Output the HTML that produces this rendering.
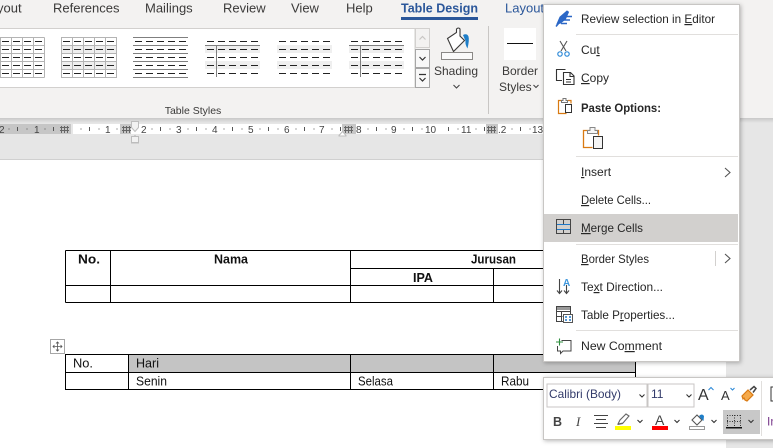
<!DOCTYPE html>
<html><head><meta charset="utf-8"><style>
html,body{margin:0;padding:0;background:#fff}
body{width:773px;height:448px;overflow:hidden;position:relative}
svg{position:absolute;left:0;top:0;display:block}
text{font-family:"Liberation Sans",sans-serif;font-size:12px;fill:#3b3a39}
.m{font-size:12px;fill:#262626}
.u{text-decoration:underline}
.r{font-size:10px;fill:#444}
.t{font-size:12.5px;fill:#111}
.tb{font-size:12.5px;fill:#111;font-weight:bold}
</style></head><body>
<svg width="773" height="448" viewBox="0 0 773 448" xmlns="http://www.w3.org/2000/svg">
<defs>
<linearGradient id="sh" x1="0" y1="0" x2="0" y2="1"><stop offset="0" stop-color="#c8c8c8"/><stop offset="1" stop-color="#e6e6e6"/></linearGradient>
<filter id="ds" x="-10%" y="-10%" width="120%" height="120%"><feDropShadow dx="1" dy="1" stdDeviation="2" flood-color="#000" flood-opacity=".28"/></filter>
<g id="dashes" stroke="#222" stroke-width="1" stroke-dasharray="7 4">
<path d="M2 4.500H55M2 12.500H55M2 20.500H55M2 28.500H55M2 36.500H55"/>
</g>
<g id="shade" fill="#efefef"><rect y="8" width="55" height="8"/><rect y="24" width="55" height="8"/></g>
</defs>

<!-- backgrounds -->
<rect width="773" height="118" fill="#f3f2f1"/>
<rect y="118" width="773" height="42" fill="#e6e6e6"/>
<rect y="118" width="773" height="5" fill="url(#sh)"/>
<rect x="0" y="159" width="726" height="289" fill="#fff"/>
<rect x="726" y="159" width="47" height="289" fill="#e6e6e6"/>
<rect x="0" y="159" width="726" height="1" fill="#d0d0d0"/>

<!-- tabs -->
<text x="-3" y="12.500" style="font-size:13px">yout</text>
<text x="53" y="12.500" style="font-size:13px">References</text>
<text x="145" y="12.500" style="font-size:13px">Mailings</text>
<text x="223" y="12.500" style="font-size:13px">Review</text>
<text x="291" y="12.500" style="font-size:13px">View</text>
<text x="346" y="12.500" style="font-size:13px">Help</text>
<text x="401" y="12.500" style="font-size:13px;fill:#2b579a;font-weight:bold" textLength="77" lengthAdjust="spacingAndGlyphs">Table Design</text>
<rect x="401" y="17" width="77" height="3" fill="#2b579a"/>
<text x="505" y="12.500" style="font-size:13px;fill:#2b579a">Layout</text>

<!-- gallery -->
<rect x="-1" y="28.500" width="416" height="59" fill="#fff" stroke="#d2d0ce"/>
<g transform="translate(-11,37)">
<use href="#dashes"/>
<path d="M11.500 .5V40.500M22.500 .5V40.500M33.500 .5V40.500M44.500 .5V40.500M55.500 .5V40.500M0 .5H55.500M0 8.500H55.500M0 16.500H55.500M0 24.500H55.500M0 32.500H55.500M0 40.500H55.500" fill="none" stroke="#b4b4b4"/>
</g>
<g transform="translate(61,37)">
<use href="#shade"/><use href="#dashes"/>
<path d="M.5 .5H55.500V40.500H.5ZM11.500 .5V40.500M22.500 .5V40.500M33.500 .5V40.500M44.500 .5V40.500M0 8.500H55M0 16.500H55M0 24.500H55M0 32.500H55" fill="none" stroke="#b4b4b4"/>
</g>
<g transform="translate(133,37)">
<use href="#dashes"/>
<path d="M0 .5H55M0 8.500H55M0 16.500H55M0 24.500H55M0 32.500H55M0 40.500H55" stroke="#7f7f7f" fill="none"/>
</g>
<g transform="translate(205,37)">
<use href="#shade"/><use href="#dashes"/>
<path d="M0 8.500H55M11.500 8V40" stroke="#7f7f7f" fill="none"/>
</g>
<g transform="translate(277,37)">
<use href="#shade"/><use href="#dashes"/>
</g>
<g transform="translate(349,37)">
<use href="#shade"/><use href="#dashes"/>
<path d="M0 8.500H55M11.500 8V40" stroke="#7f7f7f" fill="none"/>
</g>
<!-- scroll buttons -->
<rect x="415.500" y="28.500" width="14" height="19" fill="#f3f2f1" stroke="#d2d0ce"/>
<path d="M419.500 39.500l3-3 3 3" fill="none" stroke="#c8c6c4" stroke-width="1.200"/>
<rect x="415.500" y="49.500" width="14" height="18" fill="#f8f8f8" stroke="#a6a6a6"/>
<path d="M419.500 57l3 3 3-3" fill="none" stroke="#333" stroke-width="1.200"/>
<rect x="415.500" y="68.500" width="14" height="19" fill="#f8f8f8" stroke="#a6a6a6"/>
<path d="M419 74.500h7M419.500 78l3 3 3-3" fill="none" stroke="#333" stroke-width="1.200"/>

<!-- shading -->
<g fill="none">
<path d="M447.500 38.500l9-6v-3.500q2-2 3.500 0v7l4.500 4.500-11 11z" fill="#fff" stroke="#3b3a39" stroke-width="1.100"/>
<path d="M463 35q4-2 5.500 1.500 1 3.500-1 12-2.500-4-2-7.500z" fill="#1e7ec8"/>
<rect x="441.500" y="52.500" width="31" height="7" fill="#fafafa" stroke="#8a8886"/>
</g>
<text x="456" y="75" text-anchor="middle">Shading</text>
<path d="M453.500 85l3 3 3-3" fill="none" stroke="#444" stroke-width="1.100"/>
<rect x="488" y="26" width="1" height="88" fill="#c8c6c4"/>
<rect x="504" y="28" width="32" height="32" fill="#fff"/>
<rect x="507" y="43" width="26" height="1" fill="#111"/>
<text x="520" y="75" text-anchor="middle">Border</text>
<text x="499" y="91">Styles</text>
<path d="M533.500 85l2.500 2.500 2.500-2.500" fill="none" stroke="#444" stroke-width="1.100"/>
<text x="193" y="114" text-anchor="middle" style="font-size:10.500px">Table Styles</text>

<!-- ruler -->
<rect x="0" y="124" width="71" height="10" fill="#c6c6c6"/>
<rect x="73" y="124" width="47" height="10" fill="#fff"/>
<rect x="120" y="124" width="11" height="10" fill="#c6c6c6"/>
<rect x="131" y="124" width="211" height="10" fill="#fff"/>
<rect x="342" y="124" width="14" height="10" fill="#c6c6c6"/>
<rect x="356" y="124" width="130" height="10" fill="#fff"/>
<rect x="486" y="124" width="12" height="10" fill="#c6c6c6"/>
<rect x="498" y="124" width="50" height="10" fill="#fff"/>
<text class="r" x="-1" y="133">2</text><text class="r" x="34" y="133">1</text>
<text class="r" x="105" y="133">1</text><text class="r" x="141" y="133">2</text>
<text class="r" x="176" y="133">3</text><text class="r" x="212" y="133">4</text>
<text class="r" x="248" y="133">5</text><text class="r" x="284" y="133">6</text>
<text class="r" x="319" y="133">7</text><text class="r" x="356" y="133">8</text>
<text class="r" x="391" y="133">9</text><text class="r" x="425" y="133">10</text>
<text class="r" x="461" y="133">11</text><text class="r" x="498" y="133">.2</text>
<text class="r" x="532" y="133">13</text>
<path d="M8.500 129h1M17.500 127v4M26.500 129h1M44.500 129h1M53.500 127v4M80.500 129h1M89.500 127v4M98.500 129h1M116.500 129h1M151.500 129h1M160.500 127v4M169.500 129h1M187.500 129h1M196.500 127v4M205.500 129h1M223.500 129h1M232.500 127v4M241.500 129h1M259.500 129h1M268.500 127v4M277.500 129h1M295.500 129h1M304.500 127v4M313.500 129h1M331.500 129h1M340.500 127v4M367.500 129h1M376.500 127v4M385.500 129h1M403.500 129h1M412.500 127v4M421.500 129h1M448.500 127v4M457.500 129h1M475.500 129h1M484.500 127v4M511.500 129h1M520.500 127v4M529.500 129h1" stroke="#555" fill="none"/>
<g stroke="#666" stroke-width="1" fill="none">
<path d="M61.500 126v7M64.500 126v7M67.500 126v7M60 127.500h9M60 130.500h9"/>
<path d="M123.500 126v7M126.500 126v7M129.500 126v7M122 127.500h9M122 130.500h9"/>
<path d="M345.500 126v7M348.500 126v7M351.500 126v7M344 127.500h9M344 130.500h9"/>
<path d="M488.500 126v7M491.500 126v7M494.500 126v7M487 127.500h9M487 130.500h9"/>
</g>
<path d="M131.500 121.500h7v6l-3.500 4-3.500-4z" fill="#f2f2f2" stroke="#bdbdbd"/>
<path d="M131.500 139.500l3.500-4 3.500 4v3.500h-7z" fill="#f2f2f2" stroke="#bdbdbd"/>
<rect x="131.500" y="136.500" width="7" height="6" fill="#f2f2f2" stroke="#bdbdbd"/>
<path d="M339 135.500l3.500-4 3.500 4v.5h-7z" fill="#fff" stroke="#bdbdbd"/>

<!-- table 1 -->
<path d="M65.500 250.500H640M65.500 250.500V302.500M110.500 250.500V302.500M350.500 250.500V302.500M493.500 268.500V302.500M351 268.500H640M65.500 285.500H640M65.500 302.500H640" fill="none" stroke="#000"/>
<text class="tb" x="89" y="263.500" text-anchor="middle" textLength="22" lengthAdjust="spacingAndGlyphs">No.</text>
<text class="tb" x="231" y="263.500" text-anchor="middle" textLength="34" lengthAdjust="spacingAndGlyphs">Nama</text>
<text class="tb" x="493.500" y="263.500" text-anchor="middle" textLength="45" lengthAdjust="spacingAndGlyphs">Jurusan</text>
<text class="tb" x="423" y="282" text-anchor="middle" textLength="20" lengthAdjust="spacingAndGlyphs">IPA</text>

<!-- table 2 -->
<rect x="128" y="354" width="508" height="18" fill="#c4c4c4"/>
<path d="M65.500 354.500H636M65.500 372.500H636M65.500 389.500H636M65.500 354V390M128.500 354V390M350.500 354V390M493.500 354V390M635.500 354V390" fill="none" stroke="#000"/>
<text class="t" x="73" y="367.500" textLength="20" lengthAdjust="spacingAndGlyphs">No.</text>
<text class="t" x="136" y="367.500" textLength="23" lengthAdjust="spacingAndGlyphs">Hari</text>
<text class="t" x="136" y="385.500" textLength="31" lengthAdjust="spacingAndGlyphs">Senin</text>
<text class="t" x="358" y="385.500" textLength="35" lengthAdjust="spacingAndGlyphs">Selasa</text>
<text class="t" x="501" y="385.500" textLength="28" lengthAdjust="spacingAndGlyphs">Rabu</text>
<rect x="50.500" y="339.500" width="14" height="14" fill="#fff" stroke="#a6a6a6"/>
<path d="M57.500 342v9M53 346.500h9M56 343.500l1.500-1.500 1.500 1.500M56 349.500l1.500 1.500 1.500-1.500M54.500 345l-1.500 1.500 1.500 1.500M60.500 345l1.500 1.500-1.500 1.500" fill="none" stroke="#555" stroke-width=".8"/>

<!-- context menu -->
<rect x="543.500" y="4.500" width="196" height="357" fill="#fff" stroke="#c8c6c4" filter="url(#ds)"/>
<rect x="544" y="214" width="194" height="28" fill="#d2d0ce"/>
<g fill="#e1dfdd">
<rect x="576" y="34" width="162" height="1"/>
<rect x="576" y="156" width="162" height="1"/>
<rect x="576" y="244" width="162" height="1"/>
<rect x="576" y="330" width="162" height="1"/>
</g>
<text class="m" x="581" y="23" textLength="134" lengthAdjust="spacingAndGlyphs">Review selection in <tspan class="u">E</tspan>ditor</text>
<text class="m" x="581" y="54">Cu<tspan class="u">t</tspan></text>
<text class="m" x="581" y="82"><tspan class="u">C</tspan>opy</text>
<text class="m" x="581" y="112" style="font-weight:bold" textLength="80" lengthAdjust="spacingAndGlyphs">Paste Options:</text>
<text class="m" x="581" y="176"><tspan class="u">I</tspan>nsert</text>
<text class="m" x="581" y="204" textLength="70" lengthAdjust="spacingAndGlyphs"><tspan class="u">D</tspan>elete Cells...</text>
<text class="m" x="581" y="232" textLength="62" lengthAdjust="spacingAndGlyphs"><tspan class="u">M</tspan>erge Cells</text>
<text class="m" x="581" y="263" textLength="68" lengthAdjust="spacingAndGlyphs"><tspan class="u">B</tspan>order Styles</text>
<text class="m" x="581" y="291" textLength="82" lengthAdjust="spacingAndGlyphs">Te<tspan class="u">x</tspan>t Direction...</text>
<text class="m" x="581" y="319" textLength="94" lengthAdjust="spacingAndGlyphs">Table P<tspan class="u">r</tspan>operties...</text>
<text class="m" x="581" y="350" textLength="81" lengthAdjust="spacingAndGlyphs">New Co<tspan class="u">m</tspan>ment</text>
<path d="M725 168l5 4.500-5 4.500M725 254l5 4.500-5 4.500" fill="none" stroke="#555" stroke-width="1.100"/>
<rect x="715" y="251" width="1" height="15" fill="#d2d0ce"/>

<!-- editor icon -->
<g fill="none" stroke="#2b67c6">
<path d="M557 24l3-7 7-6 1.500 1-3 7-5 4z" fill="#2b67c6" stroke-width="1"/><path d="M556 26.500l2.500-3" stroke-width="1.500"/><path d="M564 16.500h8M563 20h7M561 23.500h6" stroke-width="1.500"/>
</g>
<!-- scissors -->
<path d="M560 41l6 10M567 41l-6 10" fill="none" stroke="#555" stroke-width="1.100"/>
<circle cx="560" cy="54" r="2.200" fill="none" stroke="#2e8ad8" stroke-width="1.200"/><circle cx="567" cy="54" r="2.200" fill="none" stroke="#2e8ad8" stroke-width="1.200"/>
<!-- copy -->
<g fill="none" stroke="#333" stroke-width="1.100">
<path d="M562 80.500h-5.500v-11h9"/>
<path d="M563.500 84.500v-12h7l3.500 3.500v8.500zM570 72.500v4h4M566 79.500h5M566 82h5" fill="#fff"/>
</g>
<!-- paste small -->
<path d="M564 100.500h-5.500v13h8M568 100.500h3v3" fill="none" stroke="#d97a12" stroke-width="1.200"/>
<path d="M561.500 102.500v-2h1.500v-2h3v2h1.500v2z" fill="#fff" stroke="#777"/>
<rect x="565.500" y="104.500" width="6" height="8" fill="#fff" stroke="#333"/>
<!-- paste big -->
<path d="M590 130.500h-6.500v17h9M596 130.500h2.500v5" fill="none" stroke="#d97a12" stroke-width="1.300"/>
<path d="M587.500 133.500v-3h2.500v-3h5v3h2.500v3z" fill="#f6f6f6" stroke="#888"/>
<rect x="593.500" y="136.500" width="9" height="12" fill="#f4f4f4" stroke="#333"/>
<!-- merge -->
<path d="M556.500 219.500h14v14h-14zM563.500 219.500v5M563.500 229.500v4" fill="none" stroke="#444"/>
<path d="M557 224.500h13M557 229.500h13" fill="none" stroke="#1e78c8"/>
<!-- text direction -->
<path d="M559.500 279v14M557 290.500l2.500 3 2.500-3M566.500 285v8.500M564 290.500l2.500 3 2.500-3" fill="none" stroke="#444" stroke-width="1.100"/>
<text x="563" y="286" style="font-size:10px;font-weight:bold;fill:#3f97dc">A</text>
<!-- table props -->
<g fill="none" stroke="#444">
<rect x="556.500" y="306.500" width="14" height="15"/>
<rect x="557" y="307" width="13" height="3" fill="#999" stroke="none"/>
<path d="M556.500 311.500h14M556.500 316.500h6M561.500 311v10"/>
<rect x="563.500" y="314.500" width="9" height="8" fill="#fff" stroke="#555"/>
<path d="M565 317h2M569 317h2M565 320h2M569 320h2" stroke="#1e78c8" stroke-width="1.500"/>
</g>
<!-- comment -->
<path d="M561.500 340.500h9.500v10.500h-8l-2.500 2.500v-2.500h-3v-5" fill="none" stroke="#444"/>
<path d="M559.500 338.500v7M556 342h7" stroke="#2f8f3f" stroke-width="1.100" fill="none"/>

<!-- mini toolbar -->
<rect x="543.500" y="377.500" width="240" height="62" fill="#fff" stroke="#c8c6c4" filter="url(#ds)"/>
<rect x="547" y="384" width="100" height="23" fill="#fff" stroke="#c8c6c4"/>
<rect x="648" y="384" width="46" height="23" fill="#fff" stroke="#c8c6c4"/>
<text x="549" y="398" style="font-size:12px;fill:#323a6a" textLength="72" lengthAdjust="spacingAndGlyphs">Calibri (Body)</text>
<text x="651" y="398" style="font-size:12px;fill:#323a6a">11</text>
<path d="M639.500 394.500l2.500 2.500 2.500-2.500M686.500 394.500l2.500 2.500 2.500-2.500" fill="none" stroke="#333" stroke-width="1.100"/>
<text x="698" y="400" style="font-size:16px;fill:#333">A</text>
<path d="M708.500 390l2.500-2.500 2.500 2.500" fill="none" stroke="#2e8ad8" stroke-width="1.100"/>
<text x="721" y="400" style="font-size:13px;fill:#333">A</text>
<path d="M730.500 388l2 2 2-2" fill="none" stroke="#2e8ad8" stroke-width="1.100"/>
<path d="M742 396l6-6 5 5-6 6-2-1-1-2-1 1z" fill="#f5a94a" stroke="#d97a12" stroke-width="1.200"/>
<path d="M750 390l4-3.500 2 2-3 4" fill="none" stroke="#444" stroke-width="1.500"/>
<rect x="761" y="381" width="1" height="55" fill="#e1dfdd"/>
<rect x="771" y="387" width="4" height="14" fill="#fff" stroke="#333"/>
<text x="553" y="426" style="font-size:12.500px;font-weight:bold;fill:#444">B</text>
<text x="576" y="426" style="font-size:13px;font-style:italic;fill:#444;font-family:'Liberation Serif',serif">I</text>
<path d="M594 415.500h14M596 419.500h10M594 423.500h14M596 427.500h10" stroke="#444" fill="none"/>
<path d="M618 424l2-4 6-6 3 2-6 7z M618 424.500l5-1" fill="none" stroke="#666" stroke-width="1.100"/>
<rect x="615" y="426" width="16" height="4" fill="#ff0"/>
<path d="M637.500 420l2.500 2.500 2.500-2.500M674.500 420l2.500 2.500 2.500-2.500M711.500 420l2.500 2.500 2.500-2.500" fill="none" stroke="#333" stroke-width="1.100"/>
<text x="655" y="425" style="font-size:14px;fill:#444">A</text>
<rect x="652" y="426" width="16" height="4" fill="#f00"/>
<path d="M692 420l5-5 5 5-5 5z" fill="#fff" stroke="#555" stroke-width="1.100"/>
<path d="M699 416q3-3 5 0l-.5 5-2-2z" fill="#1e7ec8"/>
<rect x="689.500" y="426.500" width="15" height="3" fill="#fff" stroke="#999"/>
<rect x="723" y="410" width="37" height="24" fill="#c8c8c8"/>
<path d="M727 415.500h14M727 421.500h14M727.500 415v12M734.500 415v12M740.500 415v12" fill="none" stroke="#333" stroke-dasharray="1 1.500"/>
<rect x="726" y="427" width="16" height="1.500" fill="#111"/>
<path d="M748.500 420l2.500 2.500 2.500-2.500" fill="none" stroke="#333" stroke-width="1.100"/>
<text x="767" y="425.500" style="font-size:12px;fill:#7a3b8c">In</text>
</svg>
</body></html>
